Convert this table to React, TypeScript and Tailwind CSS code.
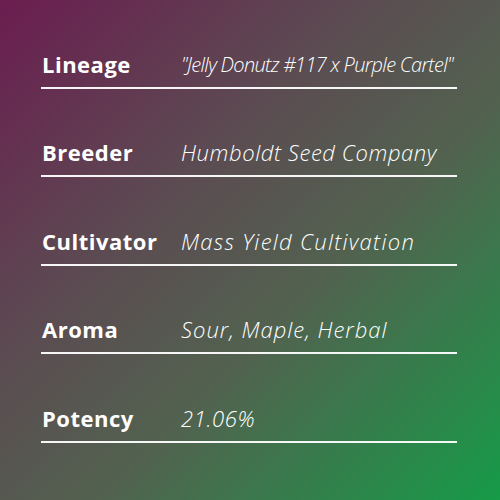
import React from 'react';

const rows = [
  { label: 'Lineage', value: '"Jelly Donutz #117 x Purple Cartel"', cls: 'text-[20px] tracking-[-0.7px]' },
  { label: 'Breeder', value: 'Humboldt Seed Company', cls: 'text-[22px] tracking-[0.6px]' },
  { label: 'Cultivator', value: 'Mass Yield Cultivation', cls: 'text-[22px] tracking-[1.3px]' },
  { label: 'Aroma', value: 'Sour, Maple, Herbal', cls: 'text-[22px] tracking-[1px]' },
  { label: 'Potency', value: '21.06%', cls: 'text-[22px] tracking-[0.6px]' },
];

const App: React.FC = () => {
  return (
    <div className="w-[500px] h-[500px] overflow-hidden bg-[linear-gradient(135deg,#6b1d50_0%,#5c4a52_35%,#52624f_60%,#169b48_100%)] font-['Open_Sans',sans-serif] text-white">
      <div className="ml-[41px] w-[416px]">
        {rows.map((row) => (
          <div
            key={row.label}
            className="h-[88.5px] flex items-end pb-[10px] border-b-2 border-white/95"
          >
            <div className="w-[140px] shrink-0 text-[22px] leading-[25px] font-bold tracking-[0.5px] pl-[1px]">
              {row.label}
            </div>
            <div className={`leading-[25px] font-light italic whitespace-nowrap ${row.cls}`}>
              {row.value}
            </div>
          </div>
        ))}
      </div>
    </div>
  );
};

export default App;
